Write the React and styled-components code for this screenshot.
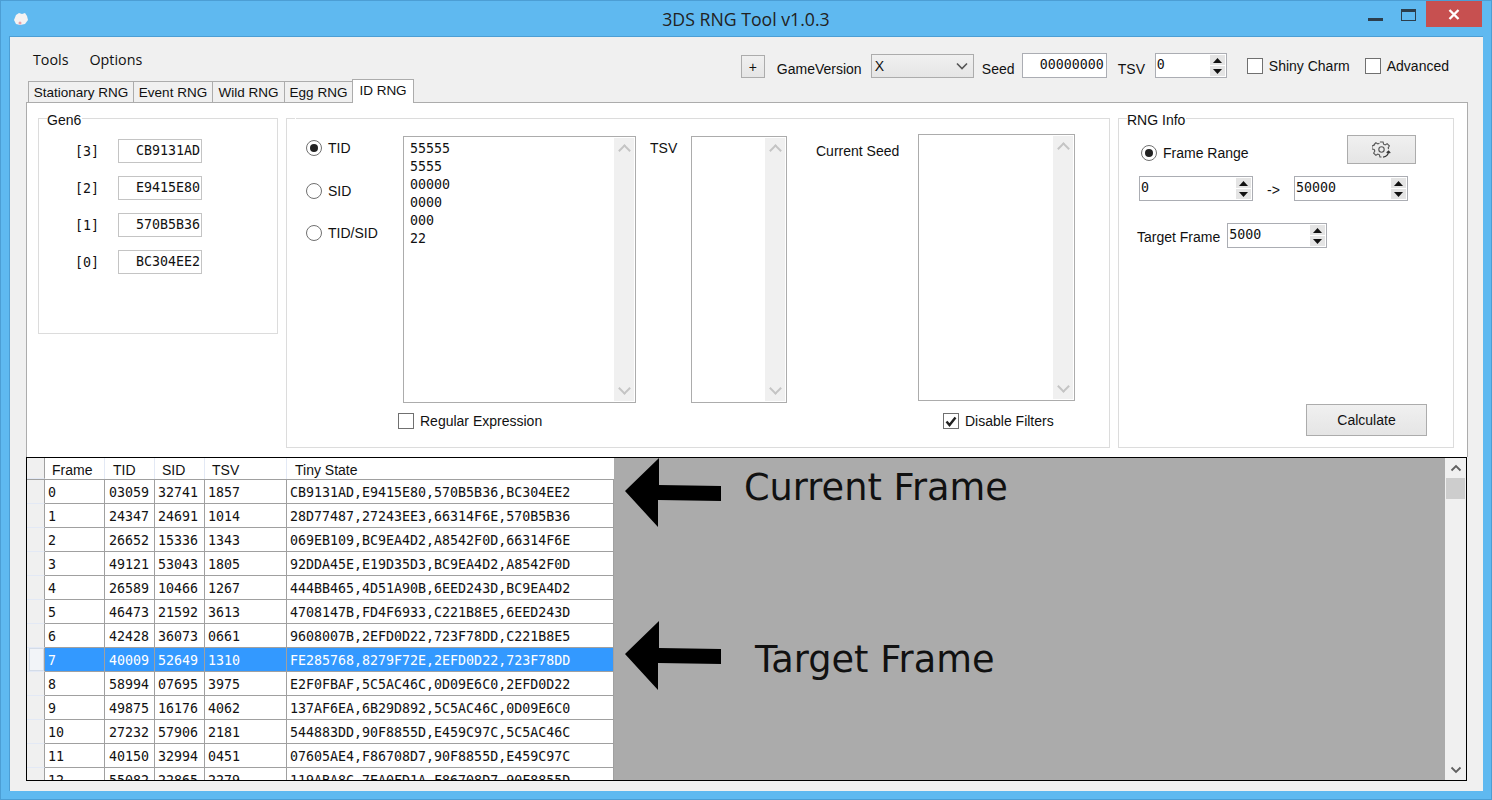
import styled, { createGlobalStyle } from 'styled-components';

const MONO = '"DejaVu Sans Mono", "Liberation Mono", monospace';
const SANS = '"Liberation Sans", Arial, sans-serif';
const UI = '"Open Sans", "Noto Sans", sans-serif';

const rows = [
  ['0', '03059', '32741', '1857', 'CB9131AD,E9415E80,570B5B36,BC304EE2'],
  ['1', '24347', '24691', '1014', '28D77487,27243EE3,66314F6E,570B5B36'],
  ['2', '26652', '15336', '1343', '069EB109,BC9EA4D2,A8542F0D,66314F6E'],
  ['3', '49121', '53043', '1805', '92DDA45E,E19D35D3,BC9EA4D2,A8542F0D'],
  ['4', '26589', '10466', '1267', '444BB465,4D51A90B,6EED243D,BC9EA4D2'],
  ['5', '46473', '21592', '3613', '4708147B,FD4F6933,C221B8E5,6EED243D'],
  ['6', '42428', '36073', '0661', '9608007B,2EFD0D22,723F78DD,C221B8E5'],
  ['7', '40009', '52649', '1310', 'FE285768,8279F72E,2EFD0D22,723F78DD'],
  ['8', '58994', '07695', '3975', 'E2F0FBAF,5C5AC46C,0D09E6C0,2EFD0D22'],
  ['9', '49875', '16176', '4062', '137AF6EA,6B29D892,5C5AC46C,0D09E6C0'],
  ['10', '27232', '57906', '2181', '544883DD,90F8855D,E459C97C,5C5AC46C'],
  ['11', '40150', '32994', '0451', '07605AE4,F86708D7,90F8855D,E459C97C'],
  ['12', '55082', '22865', '2279', '119ABA8C,7EA0FD1A,F86708D7,90F8855D'],
];

const seeds = [
  ['[3]', 'CB9131AD'],
  ['[2]', 'E9415E80'],
  ['[1]', '570B5B36'],
  ['[0]', 'BC304EE2'],
];

const tabs = [
  ['Stationary RNG', 105],
  ['Event RNG', 79],
  ['Wild RNG', 72],
  ['Egg RNG', 68],
];

const columns = [60, 50, 50, 82, 327];
const cellPads = [3, 4, 3, 3, 3];
const headers = ['Frame', 'TID', 'SID', 'TSV', 'Tiny State'];
const headerPads = [7, 8, 7, 7, 8];

const GlobalStyle = createGlobalStyle`
  html, body {
    margin: 0;
    padding: 0;
    overflow: hidden;
  }
  * {
    box-sizing: border-box;
  }
  body {
    font-family: ${SANS};
    font-size: 14px;
    color: #111;
  }
`;

export default function App() {
  return (
    <Win>
      <GlobalStyle />
      <TitleBar>
        <AppIcon viewBox='0 0 18 18'>
          <path d='M4 5 L7 3 L10 4 L13 3 L15 6 L16 10 L13 14 L8 15 L4 14 L2 10 Z' fill='#f4f2f2' />
          <circle cx='8' cy='13' r='1.5' fill='#e8a0a8' />
        </AppIcon>
        <Title>3DS RNG Tool v1.0.3</Title>
        <WinButtons>
          <MinIcon />
          <MaxIcon />
          <CloseButton>
            <svg width='12' height='11' viewBox='0 0 12 11'>
              <path d='M1.5 1 L10.5 10 M10.5 1 L1.5 10' stroke='#fff' strokeWidth='2.4' />
            </svg>
          </CloseButton>
        </WinButtons>
      </TitleBar>
      <Client>
        <TopBar>
          <Menu>
            <span>Tools</span>
            <span>Options</span>
          </Menu>
          <Tools>
            <PlusButton>+</PlusButton>
            <ToolLabel $w={94} $top={4}>GameVersion</ToolLabel>
            <Combo>
              <span>X</span>
              <svg width='12' height='8' viewBox='0 0 12 8'>
                <path d='M1 1.5 L6 6.5 L11 1.5' fill='none' stroke='#555' strokeWidth='1.6' />
              </svg>
            </Combo>
            <ToolLabel $w={40} $left={8} $top={4}>Seed</ToolLabel>
            <SeedBox>00000000</SeedBox>
            <ToolLabel $w={37} $left={11} $top={4}>TSV</ToolLabel>
            <Spinner $w={72} value='0' />
            <Check label='Shiny Charm' $left={20} />
            <Check label='Advanced' $left={15} />
          </Tools>
        </TopBar>
        <TabStrip>
          {tabs.map(([name, w]) => (
            <Tab key={name} $w={w}>{name}</Tab>
          ))}
          <ActiveTab>ID RNG</ActiveTab>
        </TabStrip>
        <Panel>
          <GenGroup>
            <Legend>Gen6</Legend>
            <SeedList>
              {seeds.map(([idx, seed]) => (
                <SeedRow key={idx}>
                  <SeedIndex>{idx}</SeedIndex>
                  <SeedInput>{seed}</SeedInput>
                </SeedRow>
              ))}
            </SeedList>
          </GenGroup>
          <Group>
            <Legend />
            <SearchGrid>
              <RadioColumn>
                <Radio label='TID' checked />
                <Radio label='SID' />
                <Radio label='TID/SID' />
              </RadioColumn>
              <ListBox $h={267}>
                {'55555\n5555\n00000\n0000\n000\n22'}
                <ListScroll />
              </ListBox>
              <FieldLabel $left={14} $top={4}>TSV</FieldLabel>
              <ListBox $h={267}>
                <ListScroll />
              </ListBox>
              <FieldLabel $left={29} $top={7}>Current Seed</FieldLabel>
              <ListBox $h={267} $up={2}>
                <ListScroll />
              </ListBox>
              <BelowCheck $col={2} $left={-5}>
                <Check label='Regular Expression' />
              </BelowCheck>
              <BelowCheck $col={6} $left={25}>
                <Check label='Disable Filters' checked />
              </BelowCheck>
            </SearchGrid>
          </Group>
          <Group>
            <Legend>RNG Info</Legend>
            <InfoBody>
              <InfoTop>
                <InfoRadio>
                  <Radio label='Frame Range' checked />
                </InfoRadio>
                <GearButton>
                  <svg width='19' height='19' viewBox='0 0 24 24' fill='none' stroke='#555' strokeWidth='1.4'>
                    <path d='M10 2.5h4l.6 2.8 2 .9 2.5-1.5 2.8 2.8-1.5 2.5.6 1.5M12 21.5h-2l-.6-2.8-2-.9-2.5 1.5-2.8-2.8 1.5-2.5-.9-2-2.8-.6v-4l2.8-.6.9-2L2.1 6.3l2.8-2.8 2.5 1.5 2-.9' />
                    <circle cx='12' cy='12' r='3.4' />
                    <path d='M14 21.5a8 8 0 0 0 7-7M18.5 16l2.5-2 2 2.5' stroke='#333' strokeWidth='1.6' />
                  </svg>
                </GearButton>
              </InfoTop>
              <RangeRow>
                <Spinner $w={114} value='0' />
                <RangeArrow>-&gt;</RangeArrow>
                <Spinner $w={114} value='50000' />
              </RangeRow>
              <TargetRow>
                <TargetLabel>Target Frame</TargetLabel>
                <Spinner $w={100} value='5000' />
              </TargetRow>
              <CalcButton>Calculate</CalcButton>
            </InfoBody>
          </Group>
        </Panel>
        <DataGrid>
          <GridTable>
            <HeaderRow>
              <RowHead />
              {headers.map((h, i) => (
                <HeaderCell key={h} $w={columns[i]} $pad={headerPads[i]}>{h}</HeaderCell>
              ))}
            </HeaderRow>
            {rows.map((r) => (
              <DataRow key={r[0]} $selected={r[0] === '7'}>
                <RowHead $selected={r[0] === '7'} />
                {r.map((v, i) => (
                  <Cell key={i} $w={columns[i]} $pad={cellPads[i]}>{v}</Cell>
                ))}
              </DataRow>
            ))}
          </GridTable>
          <GrayArea>
            <Arrow $top={0} viewBox='0 0 98 70'>
              <path d='M1 33 L35 0 L35 27 L97 28 L97 43 L34 42 L34 69 Z' fill='#000' />
            </Arrow>
            <Note $top={8} $left={130}>Current Frame</Note>
            <Arrow $top={163} viewBox='0 0 98 70'>
              <path d='M1 33 L35 0 L35 27 L97 28 L97 43 L34 42 L34 69 Z' fill='#000' />
            </Arrow>
            <Note $top={180} $left={141}>Target Frame</Note>
          </GrayArea>
          <GridScroll>
            <ScrollArrow viewBox='0 0 12 8'>
              <path d='M1.5 6.5 L6 2 L10.5 6.5' fill='none' stroke='#606060' strokeWidth='1.8' />
            </ScrollArrow>
            <GridThumb />
            <ScrollSpacer />
            <ScrollArrow viewBox='0 0 12 8'>
              <path d='M1.5 1.5 L6 6 L10.5 1.5' fill='none' stroke='#606060' strokeWidth='1.8' />
            </ScrollArrow>
          </GridScroll>
        </DataGrid>
      </Client>
    </Win>
  );
}

function Spinner({ value, $w }) {
  return (
    <SpinBox $w={$w}>
      <SpinValue>{value}</SpinValue>
      <SpinButtons>
        <SpinButton>
          <svg width='9' height='5' viewBox='0 0 9 5'><path d='M4.5 0 L9 5 L0 5 Z' fill='#111' /></svg>
        </SpinButton>
        <SpinButton>
          <svg width='9' height='5' viewBox='0 0 9 5'><path d='M0 0 L9 0 L4.5 5 Z' fill='#111' /></svg>
        </SpinButton>
      </SpinButtons>
    </SpinBox>
  );
}

function Check({ label, checked, $left }) {
  return (
    <CheckWrap $left={$left}>
      <CheckBox>
        {checked && (
          <svg width='12' height='11' viewBox='0 0 12 11'>
            <path d='M1.5 5.5 L4.5 9 L10.5 1.5' fill='none' stroke='#222' strokeWidth='2.4' />
          </svg>
        )}
      </CheckBox>
      <span>{label}</span>
    </CheckWrap>
  );
}

function Radio({ label, checked }) {
  return (
    <RadioWrap>
      <RadioDot $checked={checked} />
      <span>{label}</span>
    </RadioWrap>
  );
}

const Win = styled.div`
  width: 1492px;
  height: 800px;
  background: #5fb9f0;
  border: 1px solid #4c9ed4;
  display: flex;
  flex-direction: column;
  padding: 0 8px 8px;
`;

const TitleBar = styled.div`
  height: 35px;
  flex: none;
  margin: 0 -8px;
  padding-left: 11px;
  position: relative;
  display: flex;
  align-items: center;
`;

const AppIcon = styled.svg`
  width: 18px;
  height: 18px;
`;

const Title = styled.div`
  position: absolute;
  left: 0;
  right: 0;
  top: 6px;
  text-align: center;
  font-family: ${UI};
  font-size: 17.7px;
  line-height: 24px;
  color: #222;
`;

const WinButtons = styled.div`
  margin-left: auto;
  margin-right: 9px;
  align-self: flex-start;
  display: flex;
  align-items: flex-start;
`;

const MinIcon = styled.div`
  width: 15px;
  height: 3px;
  margin-top: 17px;
  background: #2c3e4c;
`;

const MaxIcon = styled.div`
  width: 15px;
  height: 12px;
  margin: 8px 10px 0 18px;
  border: 1px solid #2c3e4c;
  border-top-width: 3px;
`;

const CloseButton = styled.div`
  width: 56px;
  height: 26px;
  background: #c75050;
  display: flex;
  align-items: center;
  justify-content: center;
`;

const Client = styled.div`
  flex: 1;
  background: #f0f0f0;
  border: 1px solid #4c9ed4;
  border-width: 1px 0 0 1px;
  display: flex;
  flex-direction: column;
  padding: 0 15px 0 16px;
  min-height: 0;
`;

const TopBar = styled.div`
  height: 42px;
  flex: none;
  display: flex;
  justify-content: space-between;
  align-items: flex-start;
`;

const Menu = styled.div`
  display: flex;
  gap: 21px;
  padding: 13px 0 0 7px;
  font-family: ${UI};
  font-size: 14.3px;
  line-height: 20px;
`;

const Tools = styled.div`
  display: flex;
  align-items: flex-start;
  padding-top: 16px;
  margin-right: 19px;
`;

const Button = styled.div`
  background: linear-gradient(#f0f0f0, #e5e5e5);
  border: 1px solid #acacac;
  display: flex;
  align-items: center;
  justify-content: center;
  color: #111;
`;

const PlusButton = styled(Button)`
  width: 24px;
  height: 23px;
  margin-top: 2px;
  margin-right: 12px;
`;

const ToolLabel = styled.span`
  width: ${(p) => p.$w}px;
  margin-left: ${(p) => p.$left || 0}px;
  margin-top: ${(p) => p.$top || 0}px;
  line-height: 24px;
  white-space: nowrap;
`;

const Combo = styled.div`
  width: 103px;
  height: 24px;
  margin-top: 1px;
  padding: 0 5px 0 3px;
  border: 1px solid #acacac;
  background: linear-gradient(#f0f0f0, #e5e5e5);
  display: flex;
  align-items: center;
  justify-content: space-between;
  line-height: 18px;
`;

const SeedBox = styled.div`
  width: 85px;
  height: 25px;
  border: 1px solid #abadb3;
  background: #fff;
  font-family: ${MONO};
  font-size: 13.3px;
  line-height: 21px;
  text-align: right;
  padding-right: 2px;
`;

const SpinBox = styled.div`
  width: ${(p) => p.$w}px;
  height: 25px;
  border: 1px solid #abadb3;
  background: #fff;
  display: flex;
  justify-content: space-between;
`;

const SpinValue = styled.span`
  font-family: ${MONO};
  font-size: 13.3px;
  line-height: 21px;
  padding-left: 1px;
`;

const SpinButtons = styled.div`
  width: 15px;
  margin: 1px;
  display: flex;
  flex-direction: column;
  gap: 1px;
`;

const SpinButton = styled.div`
  flex: 1;
  background: #e4e4e4;
  display: flex;
  align-items: center;
  justify-content: center;
`;

const CheckWrap = styled.label`
  display: flex;
  align-items: center;
  gap: 6px;
  height: 20px;
  margin-left: ${(p) => p.$left || 0}px;
  margin-top: 3px;
  white-space: nowrap;
`;

const CheckBox = styled.span`
  width: 16px;
  height: 16px;
  border: 1px solid #707070;
  background: #fff;
  display: flex;
  align-items: center;
  justify-content: center;
`;

const RadioWrap = styled.label`
  display: flex;
  align-items: center;
  gap: 6px;
  height: 20px;
  white-space: nowrap;
`;

const RadioDot = styled.span`
  width: 16px;
  height: 16px;
  border: 1px solid #707070;
  border-radius: 50%;
  background: #fff;
  display: flex;
  align-items: center;
  justify-content: center;
  &::after {
    content: '';
    width: 8px;
    height: 8px;
    border-radius: 50%;
    background: ${(p) => (p.$checked ? '#222' : 'transparent')};
  }
`;

const TabStrip = styled.div`
  height: 24px;
  flex: none;
  display: flex;
  align-items: flex-end;
  padding-left: 2px;
  position: relative;
  z-index: 1;
  margin-bottom: -1px;
`;

const Tab = styled.div`
  width: ${(p) => p.$w}px;
  height: 22px;
  border: 1px solid #acacac;
  border-right-width: 0;
  background: #f0f0f0;
  font-size: 13.5px;
  line-height: 21px;
  text-align: center;
  white-space: nowrap;
`;

const ActiveTab = styled.div`
  width: 62px;
  height: 24px;
  border: 1px solid #acacac;
  border-bottom-width: 0;
  background: #fff;
  font-size: 13.5px;
  line-height: 21px;
  text-align: center;
  white-space: nowrap;
`;

const Panel = styled.div`
  height: 355px;
  width: 1442px;
  flex: none;
  padding: 7px 13px 0 11px;
  border: 1px solid #acacac;
  border-bottom-width: 0;
  background: #fff;
  display: grid;
  grid-template-columns: 240px 824px 336px;
  column-gap: 8px;
  align-items: start;
`;

const Group = styled.fieldset`
  margin: 0;
  padding: 0;
  min-width: 0;
  height: 338px;
  border: 1px solid #dcdcdc;
`;

const GenGroup = styled(Group)`
  height: 224px;
`;

const Legend = styled.legend`
  margin-left: 8px;
  padding: 0 1px 0 0;
  height: 16px;
  line-height: 20px;
`;

const SeedList = styled.div`
  display: flex;
  flex-direction: column;
  gap: 13px;
  padding: 13px 0 0 36px;
`;

const SeedRow = styled.div`
  display: flex;
  align-items: center;
  gap: 18px;
`;

const SeedIndex = styled.span`
  font-family: ${MONO};
  font-size: 13.3px;
  width: 25px;
`;

const SeedInput = styled.div`
  width: 84px;
  height: 24px;
  border: 1px solid #c4c4c4;
  font-family: ${MONO};
  font-size: 13.3px;
  line-height: 22px;
  text-align: right;
  padding-right: 1px;
`;

const SearchGrid = styled.div`
  display: grid;
  grid-template-columns: 97px 233px 55px 96px 131px 157px;
  padding: 10px 0 0 19px;
`;

const RadioColumn = styled.div`
  display: flex;
  flex-direction: column;
  gap: 22.5px;
  padding-top: 2px;
`;

const ListBox = styled.div`
  position: relative;
  height: ${(p) => p.$h}px;
  margin-top: ${(p) => (p.$up ? -p.$up : 0)}px;
  border: 1px solid #acacac;
  padding: 3px 0 0 6px;
  font-family: ${MONO};
  font-size: 13.3px;
  line-height: 18px;
  white-space: pre;
`;

const ListScroll = styled.div`
  position: absolute;
  top: 1px;
  right: 1px;
  bottom: 1px;
  width: 20px;
  background: #f0f0f0;
  &::before,
  &::after {
    content: '';
    position: absolute;
    left: 6px;
    width: 7px;
    height: 7px;
    border: solid #c4c4c4;
    border-width: 2px 0 0 2px;
    transform: rotate(45deg);
    top: 8px;
  }
  &::after {
    top: auto;
    bottom: 8px;
    transform: rotate(225deg);
  }
`;

const FieldLabel = styled.div`
  padding-left: ${(p) => p.$left}px;
  padding-top: ${(p) => p.$top}px;
  white-space: nowrap;
`;

const BelowCheck = styled.div`
  grid-row: 2;
  grid-column: ${(p) => p.$col};
  margin-left: ${(p) => p.$left}px;
  padding-top: 5px;
`;

const InfoBody = styled.div`
  display: flex;
  flex-direction: column;
  padding-top: 9px;
`;

const InfoTop = styled.div`
  display: flex;
  justify-content: space-between;
  align-items: flex-start;
  padding: 0 37px 0 22px;
`;

const InfoRadio = styled.div`
  padding-top: 8px;
`;

const GearButton = styled(Button)`
  width: 69px;
  height: 29px;
`;

const RangeRow = styled.div`
  display: flex;
  align-items: flex-start;
  padding: 12px 0 0 20px;
`;

const RangeArrow = styled.span`
  width: 41px;
  text-align: center;
  padding-top: 6px;
`;

const TargetRow = styled.div`
  display: flex;
  align-items: center;
  gap: 7px;
  padding: 22px 0 0 18px;
`;

const TargetLabel = styled.span`
  padding-top: 3px;
`;

const CalcButton = styled(Button)`
  width: 121px;
  height: 32px;
  margin: 156px 0 0 187px;
`;

const DataGrid = styled.div`
  width: 1441px;
  height: 324px;
  flex: none;
  border: 1px solid #000;
  background: #ababab;
  display: flex;
  overflow: hidden;
  position: relative;
`;

const GridTable = styled.div`
  width: 587px;
  flex: none;
  background: #fff;
`;

const HeaderRow = styled.div`
  display: flex;
  height: 22px;
  border-bottom: 1px solid #a0a0a0;
`;

const HeaderCell = styled.div`
  width: ${(p) => p.$w}px;
  padding-left: ${(p) => p.$pad}px;
  border-right: 1px solid #e3e9f5;
  line-height: 24px;
  white-space: nowrap;
  &:last-child {
    border-right: 0;
  }
`;

const RowHead = styled.div`
  width: 18px;
  flex: none;
  background: #f0f0f0;
  border-right: 1px solid #a0a0a0;
  border-bottom: 1px solid #e3e9f5;
  position: relative;
  &::after {
    content: ${(p) => (p.$selected ? "''" : 'none')};
    position: absolute;
    left: 2px;
    right: 0;
    top: 0;
    bottom: 0;
    background: #f2f4f8;
    border: 1px solid #d4dce8;
  }
`;

const DataRow = styled.div`
  display: flex;
  height: 24px;
  background: ${(p) => (p.$selected ? '#3399ff' : '#fff')};
  color: ${(p) => (p.$selected ? '#fff' : '#111')};
`;

const Cell = styled.div`
  width: ${(p) => p.$w}px;
  padding-left: ${(p) => p.$pad}px;
  border-right: 1px solid #a0a0a0;
  border-bottom: 1px solid #a0a0a0;
  font-family: ${MONO};
  font-size: 13.3px;
  line-height: 25px;
  white-space: nowrap;
  overflow: hidden;
`;

const GrayArea = styled.div`
  flex: 1;
  position: relative;
`;

const Arrow = styled.svg`
  position: absolute;
  left: 10px;
  top: ${(p) => p.$top}px;
  width: 98px;
  height: 70px;
`;

const Note = styled.div`
  position: absolute;
  left: ${(p) => p.$left}px;
  top: ${(p) => p.$top}px;
  font-family: 'DejaVu Sans', sans-serif;
  font-size: 36.7px;
  line-height: 44px;
  color: #111;
  white-space: nowrap;
`;

const GridScroll = styled.div`
  width: 21px;
  flex: none;
  background: #f0f0f0;
  display: flex;
  flex-direction: column;
  align-items: center;
`;

const ScrollArrow = styled.svg`
  width: 12px;
  height: 8px;
  margin: 6px 0;
  flex: none;
`;

const GridThumb = styled.div`
  width: 19px;
  height: 21px;
  flex: none;
  background: #cdcdcd;
`;

const ScrollSpacer = styled.div`
  flex: 1;
`;
